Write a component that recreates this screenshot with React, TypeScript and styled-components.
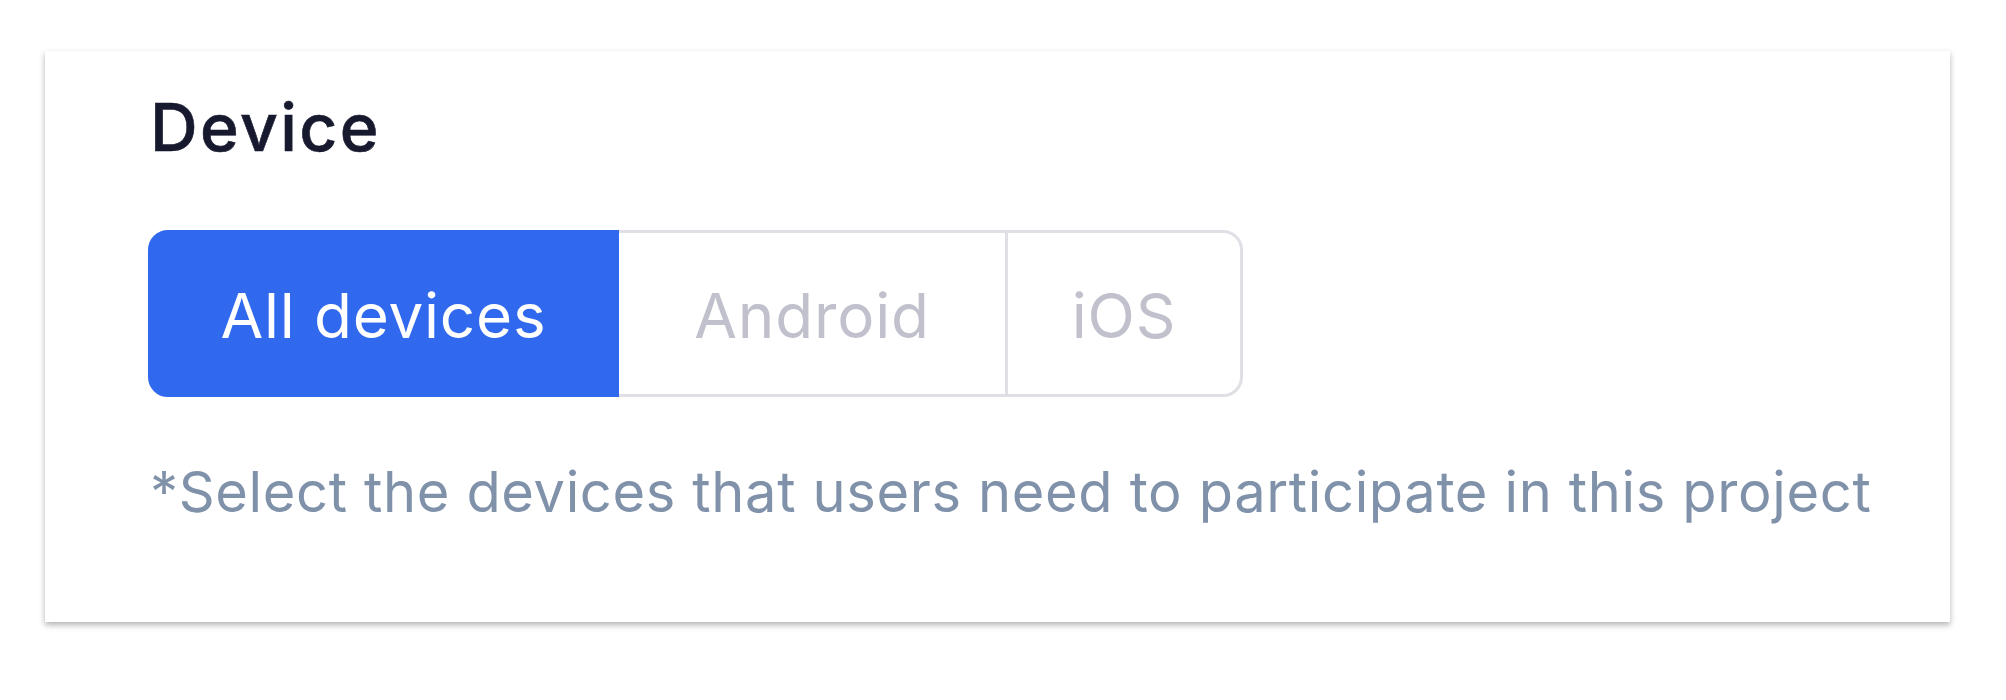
import React, { useState } from 'react';
import styled, { createGlobalStyle } from 'styled-components';

const GlobalStyle = createGlobalStyle`
	html, body {
		margin: 0;
		padding: 0;
		background: #ffffff;
	}
	body {
		font-family: Inter, 'Noto Sans', sans-serif;
	}
`;

const Page = styled('div')({
	padding: '51px 0 78px 45px',
});

const Card = styled('section')({
	width: '1905px',
	boxSizing: 'border-box',
	background: '#ffffff',
	boxShadow: '0 3px 6px rgba(0, 0, 0, 0.3)',
	padding: '36px 0 97px 105px',
});

const Title = styled('h2')({
	margin: 0,
	fontSize: '66px',
	lineHeight: '80px',
	fontWeight: 500,
	color: '#171a2e',
	letterSpacing: '2.4px',
	WebkitTextStroke: '0.6px #171a2e',
});

const SegmentGroup = styled('div')({
	display: 'flex',
	marginTop: '63px',
	marginLeft: '-2px',
});

const Segment = styled('button')<{ $active?: boolean; $width: number }>(({ $active, $width }) => ({
	display: 'flex',
	alignItems: 'center',
	justifyContent: 'center',
	width: `${$width}px`,
	height: '167px',
	boxSizing: 'border-box',
	padding: '4px 0 0',
	fontFamily: 'Inter, "Noto Sans", sans-serif',
	fontSize: '62px',
	fontWeight: 400,
	letterSpacing: '0.8px',
	cursor: 'pointer',
	background: $active ? '#3169ee' : '#ffffff',
	color: $active ? '#ffffff' : '#c0c1cc',
	border: `3px solid ${$active ? '#3169ee' : '#dfe0e6'}`,
	position: 'relative',
	zIndex: $active ? 1 : 0,

	'& + &': {
		marginLeft: '-3px',
	},
	'&:first-child': {
		borderRadius: '20px 0 0 20px',
	},
	'&:last-child': {
		borderRadius: '0 20px 20px 0',
	},
}));

const Hint = styled('p')({
	margin: '62px 0 0',
	fontSize: '56px',
	lineHeight: '66px',
	fontWeight: 400,
	color: '#8091aa',
	letterSpacing: '0.64px',
});

const DEVICES = [
	{ label: 'All devices', width: 471 },
	{ label: 'Android', width: 392 },
	{ label: 'iOS', width: 238 },
];

export default function App() {
	const [device, setDevice] = useState(0);
	return (
		<Page>
			<GlobalStyle />
			<Card>
				<Title>Device</Title>
				<SegmentGroup>
					{DEVICES.map((d, i) => (
						<Segment
							key={d.label}
							$active={i === device}
							$width={d.width}
							onClick={() => setDevice(i)}
						>
							{d.label}
						</Segment>
					))}
				</SegmentGroup>
				<Hint>*Select the devices that users need to participate in this project</Hint>
			</Card>
		</Page>
	);
}
